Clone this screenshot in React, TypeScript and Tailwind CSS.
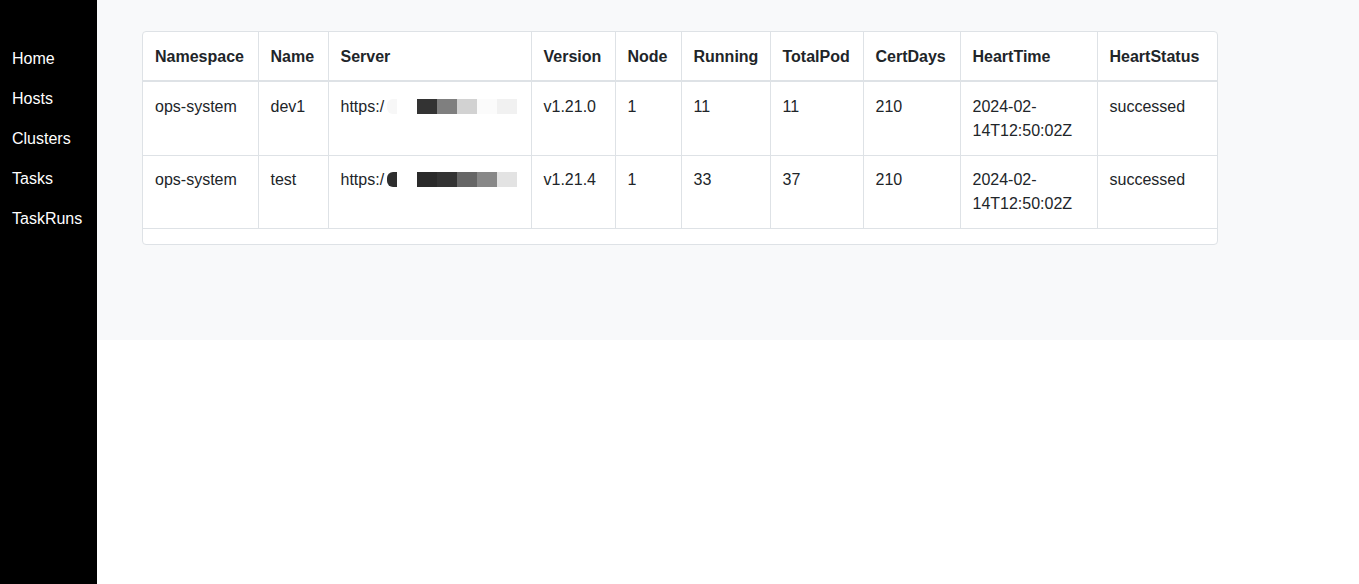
const navItems = ["Home", "Hosts", "Clusters", "Tasks", "TaskRuns"];

const headers = [
  { label: "Namespace", w: "w-[115px]" },
  { label: "Name", w: "w-[70px]" },
  { label: "Server", w: "w-[203px]" },
  { label: "Version", w: "w-[84px]" },
  { label: "Node", w: "w-[66px]" },
  { label: "Running", w: "w-[89px]" },
  { label: "TotalPod", w: "w-[93px]" },
  { label: "CertDays", w: "w-[97px]" },
  { label: "HeartTime", w: "w-[137px]" },
  { label: "HeartStatus", w: "w-[120px]" },
];

type Cluster = {
  namespace: string;
  name: string;
  blur: string[];
  version: string;
  node: number;
  running: number;
  totalPod: number;
  certDays: number;
  heartTime: string;
  heartStatus: string;
};

const clusters: Cluster[] = [
  {
    namespace: "ops-system",
    name: "dev1",
    blur: ["bg-[#f7f7f7]", "bg-[#ffffff]", "bg-[#333333]", "bg-[#7f7f7f]", "bg-[#d2d2d2]", "bg-[#fbfbfb]", "bg-[#f1f1f1]"],
    version: "v1.21.0",
    node: 1,
    running: 11,
    totalPod: 11,
    certDays: 210,
    heartTime: "2024-02-14T12:50:02Z",
    heartStatus: "successed",
  },
  {
    namespace: "ops-system",
    name: "test",
    blur: ["bg-[#2e2e2e]", "bg-[#ffffff]", "bg-[#2a2a2a]", "bg-[#333333]", "bg-[#666666]", "bg-[#888888]", "bg-[#e3e3e3]"],
    version: "v1.21.4",
    node: 1,
    running: 33,
    totalPod: 37,
    certDays: 210,
    heartTime: "2024-02-14T12:50:02Z",
    heartStatus: "successed",
  },
];

const cell =
  "border border-[#dee2e6] first:border-l-0 last:border-r-0 px-3 pt-[13px] pb-[11px] align-top text-left";

function Blurred({ blocks }: { blocks: string[] }) {
  return (
    <span className="inline-flex ml-[3px] align-[-2px] h-[15px]">
      {blocks.map((b, i) => (
        <span
          key={i}
          className={`${b} h-[15px] ${i === 0 ? "w-[10px] rounded-l-md" : "w-[20px]"}`}
        />
      ))}
    </span>
  );
}

export default function App() {
  return (
    <div
      className="flex min-h-[584px] text-[#212529] bg-white"
      style={{ fontFamily: '"Liberation Sans", Arial, sans-serif' }}
    >
      <aside className="w-[97px] shrink-0 bg-black min-h-[584px] pt-[39px]">
        <ul>
          {navItems.map((item) => (
            <li key={item} className="px-3 py-2 text-base leading-6 text-white">
              {item}
            </li>
          ))}
        </ul>
      </aside>

      <main className="flex-1 h-[340px] bg-[#f8f9fa] pl-[45px] pt-[31px]">
        <div className="w-[1076px] bg-white border border-[#dee2e6] rounded pb-[15px]">
          <table className="table-fixed border-collapse w-[1074px] text-base leading-6">
            <thead>
              <tr>
                {headers.map((h) => (
                  <th key={h.label} className={`${cell} ${h.w} border-t-0 border-b-2 font-bold`}>
                    {h.label}
                  </th>
                ))}
              </tr>
            </thead>
            <tbody>
              {clusters.map((c, i) => (
                <tr
                  key={c.name}
                  className={i === clusters.length - 1 ? "h-[73px] [&>td]:pt-[12px]" : "h-[74px]"}
                >
                  <td className={cell}>{c.namespace}</td>
                  <td className={cell}>{c.name}</td>
                  <td className={`${cell} whitespace-nowrap overflow-hidden`}>
                    https:/
                    <Blurred blocks={c.blur} />
                  </td>
                  <td className={cell}>{c.version}</td>
                  <td className={cell}>{c.node}</td>
                  <td className={cell}>{c.running}</td>
                  <td className={cell}>{c.totalPod}</td>
                  <td className={cell}>{c.certDays}</td>
                  <td className={cell}>{c.heartTime}</td>
                  <td className={cell}>{c.heartStatus}</td>
                </tr>
              ))}
            </tbody>
          </table>
        </div>
      </main>
    </div>
  );
}
